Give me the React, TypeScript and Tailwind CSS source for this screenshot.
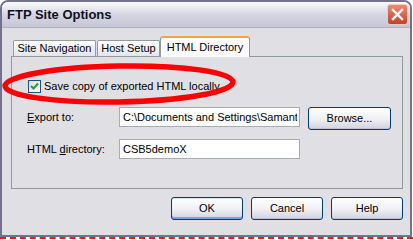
import type { ReactNode } from 'react';

function XpButton({ children, isDefault }: { children: ReactNode; isDefault?: boolean }): JSX.Element {
  return (
    <div
      className={
        'flex h-[23px] w-[72px] items-center justify-center rounded-[3px] border border-[#003c74] bg-gradient-to-b from-white via-[#f1f1f5] to-[#d3d3df] text-[11px] text-black ' +
        (isDefault ? 'shadow-[inset_0_-2px_0_#7aa2e8,inset_0_1px_0_#cee7ff]' : 'shadow-[inset_0_-1px_0_#c0c0d0]')
      }
    >
      {children}
    </div>
  );
}

function Tab({ label, active, width }: { label: string; active?: boolean; width: string }): JSX.Element {
  if (active) {
    return (
      <div className={`relative z-10 -mb-px flex h-[21px] ${width} items-start justify-center rounded-t-[3px] border-x border-[#919b9c] border-t-[2px] border-t-[#f5a43a] bg-[#fcfcfe] pt-[1px] text-[11px]`}>
        {label}
      </div>
    );
  }
  return (
    <div className={`flex h-[16px] ${width} items-center justify-center rounded-t-[2px] border-x border-t border-[#919b9c] bg-gradient-to-b from-white to-[#e4e4ec] text-[11px]`}>
      {label}
    </div>
  );
}

export default function App(): JSX.Element {
  return (
    <div className="relative h-[240px] w-[413px] overflow-hidden bg-white font-['Liberation_Sans',Arial,sans-serif] text-black">
      <div className="flex h-[237px] w-[412px] flex-col rounded-t-[8px] border-2 border-[#72728f] bg-[#e0dfe3]">
        {/* title bar */}
        <div className="flex h-[26px] items-center justify-between rounded-t-[6px] border-b border-[#b0b0c4] bg-gradient-to-b from-[#fbfbfd] via-[#d6d6e2] to-[#c6c6d6] pl-[5px] pr-[2px]">
          <span className="text-[13px] font-bold text-[#101020]">FTP Site Options</span>
          <div className="flex h-[21px] w-[21px] items-center justify-center rounded-[3px] border border-[#f3c7bd] bg-gradient-to-b from-[#eb8a6f] to-[#c4402b]">
            <svg width="13" height="13" viewBox="0 0 13 13">
              <path d="M2 2 L11 11 M11 2 L2 11" stroke="white" strokeWidth="2.4" strokeLinecap="square" />
            </svg>
          </div>
        </div>

        {/* client */}
        <div className="flex flex-1 flex-col pl-[9px] pr-[7px] pt-[8px]">
          <div className="flex h-[20px] items-end pl-[2px]">
            <Tab label="Site Navigation" width="w-[83px]" />
            <div className="w-px" />
            <Tab label="Host Setup" width="w-[63px]" />
            <Tab label="HTML Directory" width="w-[90px]" active />
          </div>
          <div className="h-[133px] border border-[#919b9c] pl-[15px] pt-[23px] text-[11px]">
            <div className="flex h-[13px] items-center gap-[3px] pl-px">
              <div className="flex h-[13px] w-[13px] items-center justify-center border border-[#1c5180] bg-gradient-to-br from-[#dcdcd7] to-white">
                <svg width="9" height="9" viewBox="0 0 9 9">
                  <path d="M1 4 L3.5 6.5 L8 1.5" fill="none" stroke="#21a121" strokeWidth="2" />
                </svg>
              </div>
              <span>Save copy of exported HTML locally</span>
            </div>
            <div className="mt-[14px] flex items-start">
              <div className="flex h-[20px] w-[92px] items-center">
                <span><span className="underline">E</span>xport to:</span>
              </div>
              <div className="flex h-[20px] w-[181px] items-center overflow-hidden whitespace-nowrap border border-[#a5acb2] bg-white pl-[3px]">
                <span className="block w-[174px] overflow-hidden">C:\Documents and Settings\Samanth</span>
              </div>
              <div className="ml-[8px] w-[83px]">
                <div className="flex h-[23px] items-center justify-center rounded-[3px] border border-[#003c74] bg-gradient-to-b from-white via-[#f1f1f5] to-[#d3d3df] shadow-[inset_0_-1px_0_#c0c0d0]">
                  Browse...
                </div>
              </div>
            </div>
            <div className="mt-[9px] flex items-start">
              <div className="flex h-[20px] w-[92px] items-center">
                <span>HTML <span className="underline">d</span>irectory:</span>
              </div>
              <div className="flex h-[20px] w-[181px] items-center border border-[#a5acb2] bg-white pl-[3px]">
                CSB5demoX
              </div>
            </div>
          </div>
          <div className="mt-[8px] flex justify-end gap-[8px]">
            <XpButton isDefault>OK</XpButton>
            <XpButton>Cancel</XpButton>
            <XpButton>Help</XpButton>
          </div>
        </div>
      </div>
      <div className="h-[3px] border-t-2 border-dashed border-[#e02020]" />

      {/* red highlight ellipse drawn over the dialog */}
      <svg className="pointer-events-none absolute left-0 top-0" width="413" height="240" viewBox="0 0 413 240">
        <ellipse cx="119" cy="84" rx="114" ry="18" fill="none" stroke="#ff0000" strokeWidth="5.5" transform="rotate(-1 119 84)" />
      </svg>
    </div>
  );
}
